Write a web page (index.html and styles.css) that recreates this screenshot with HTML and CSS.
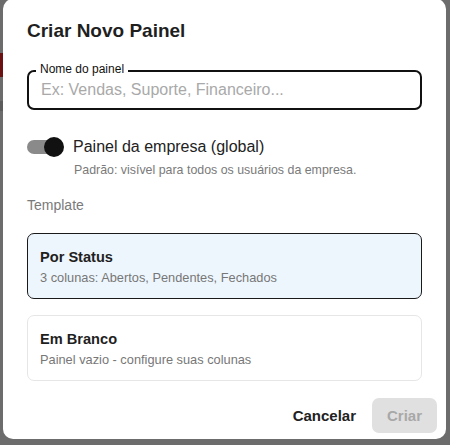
FILE: index.html
```html
<!DOCTYPE html>
<html lang="pt-BR">
<head>
  <meta charset="UTF-8" />
  <meta name="viewport" content="width=device-width, initial-scale=1.0"/>
  <title>Criar Novo Painel</title>
  <link rel="stylesheet" href="styles.css">
</head>
<body>

<div class="backdrop">
  <div class="page-edge">
    <span class="edge-red"></span>
    <span class="edge-dark"></span>
  </div>

  <div class="dialog">
    <h2 class="dialog-title">Criar Novo Painel</h2>

    <div class="field">
      <label class="field-label" for="panelName">Nome do painel</label>
      <input id="panelName" type="text" placeholder="Ex: Vendas, Suporte, Financeiro..." />
    </div>

    <div class="switch-row">
      <span class="switch">
        <span class="switch-track"></span>
        <span class="switch-thumb"></span>
      </span>
      <span class="switch-label">Painel da empresa (global)</span>
    </div>
    <p class="switch-help">Padrão: visível para todos os usuários da empresa.</p>

    <p class="section-label">Template</p>

    <div class="templates">
      <div class="template-card selected">
        <div class="template-title">Por Status</div>
        <div class="template-desc">3 colunas: Abertos, Pendentes, Fechados</div>
      </div>
      <div class="template-card">
        <div class="template-title">Em Branco</div>
        <div class="template-desc">Painel vazio - configure suas colunas</div>
      </div>
    </div>

    <div class="dialog-actions">
      <button class="btn-cancel">Cancelar</button>
      <button class="btn-create" disabled>Criar</button>
    </div>
  </div>
</div>

</body>
</html>
```

FILE: styles.css
```css
body {
  font-family: 'Liberation Sans', Arial, sans-serif;
  margin: 0;
  padding: 0;
  background-color: #6c6c6c;
  color: #222;
}

.backdrop {
  display: flex;
  height: 445px;
  overflow: hidden;
}

.page-edge {
  width: 3px;
  flex-shrink: 0;
  display: flex;
  flex-direction: column;
}

.edge-red {
  display: block;
  height: 24px;
  margin-top: 53px;
  background-color: #6a1212;
}

.edge-dark {
  display: block;
  height: 10px;
  margin-top: 24px;
  background-color: #5c5c5c;
}

.dialog {
  width: 443px;
  height: 440px;
  margin-top: -1px;
  background-color: #fff;
  border-radius: 10px;
  box-sizing: border-box;
  padding: 20px 24px 0 24px;
  display: flex;
  flex-direction: column;
}

.dialog-title {
  font-size: 19px;
  font-weight: 700;
  margin: 0;
  line-height: 24px;
  color: #1f1f1f;
}

.field {
  position: relative;
  margin-top: 27px;
}

.field-label {
  position: absolute;
  left: 9px;
  top: -8px;
  padding: 0 4px;
  background-color: #fff;
  font-size: 12px;
  line-height: 14px;
  color: #111;
}

.field input {
  width: 100%;
  box-sizing: border-box;
  height: 40px;
  border: 2px solid #111;
  border-radius: 7px;
  padding: 0 12px;
  font-family: 'Liberation Sans', Arial, sans-serif;
  font-size: 16px;
  color: #222;
  outline: none;
}

.field input::placeholder {
  color: #a9a9a9;
}

.switch-row {
  display: flex;
  align-items: center;
  margin-top: 27px;
  gap: 11px;
}

.switch {
  position: relative;
  width: 35px;
  height: 20px;
  display: block;
}

.switch-track {
  position: absolute;
  left: 0;
  top: 3px;
  width: 35px;
  height: 14px;
  border-radius: 7px;
  background-color: #8a8a8a;
}

.switch-thumb {
  position: absolute;
  right: -2px;
  top: 0;
  width: 20px;
  height: 20px;
  border-radius: 50%;
  background-color: #111;
}

.switch-label {
  font-size: 16px;
  color: #222;
}

.switch-help {
  margin: 6px 0 0 47px;
  font-size: 12.4px;
  color: #7a7a7a;
}

.section-label {
  margin: 20px 0 0 0;
  font-size: 14px;
  color: #7a7a7a;
}

.templates {
  display: flex;
  flex-direction: column;
  gap: 16px;
  margin-top: 20px;
}

.template-card {
  border: 1px solid #e6e6e6;
  border-radius: 7px;
  padding: 14px 12px 12px 12px;
  height: 66px;
  box-sizing: border-box;
}

.template-card.selected {
  border-color: #1a1a1a;
  background-color: #eef6fd;
}

.template-title {
  font-size: 14.6px;
  font-weight: 700;
  color: #1f1f1f;
  line-height: 18px;
}

.template-desc {
  font-size: 12.8px;
  color: #777;
  margin-top: 4px;
  line-height: 16px;
}

.dialog-actions {
  display: flex;
  justify-content: flex-end;
  align-items: center;
  gap: 16px;
  margin-top: 17px;
  margin-right: -15px;
}

.btn-cancel {
  background: none;
  border: none;
  font-family: 'Liberation Sans', Arial, sans-serif;
  font-size: 15px;
  font-weight: 700;
  color: #222;
  padding: 8px 0;
  cursor: pointer;
}

.btn-create {
  background-color: #e0e0e0;
  border: none;
  border-radius: 7px;
  width: 65px;
  height: 35px;
  font-family: 'Liberation Sans', Arial, sans-serif;
  font-size: 15px;
  font-weight: 700;
  color: #a8a8a8;
}
```
